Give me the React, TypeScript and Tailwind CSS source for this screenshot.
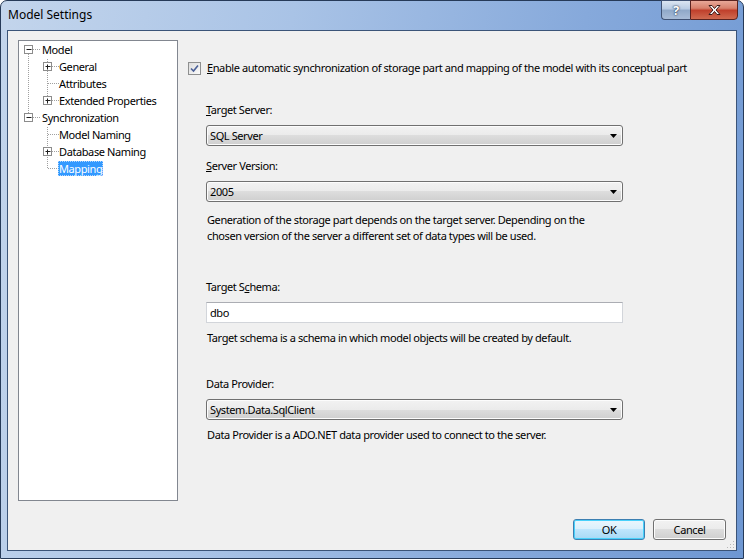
import React from 'react';

const treeRows = [
  { label: 'Model', level: 0 },
  { label: 'General', level: 1 },
  { label: 'Attributes', level: 1 },
  { label: 'Extended Properties', level: 1 },
  { label: 'Synchronization', level: 0 },
  { label: 'Model Naming', level: 1 },
  { label: 'Database Naming', level: 1 },
  { label: 'Mapping', level: 1, selected: true },
];

const rowY = (i: number) => 8.5 + 17 * i;

const TreeLines = () => {
  const box = (x: number, i: number, plus: boolean) => {
    const c = rowY(i);
    return (
      <g key={`b${x}-${i}`}>
        <rect x={x - 4} y={c - 4} width={8} height={8} fill="#fff" stroke="#8c8c8c" />
        <line x1={x - 2} y1={c} x2={x + 3} y2={c} stroke="#1f1f1f" />
        {plus && <line x1={x} y1={c - 2} x2={x} y2={c + 3} stroke="#1f1f1f" />}
      </g>
    );
  };
  const dots = { stroke: '#a0a0a0', strokeDasharray: '1 1' };
  return (
    <svg className="absolute left-0 top-0" width={158} height={180}>
      {/* root level */}
      <line x1={9.5} y1={13} x2={9.5} y2={rowY(4) - 4} {...dots} />
      <line x1={14} y1={rowY(0)} x2={21} y2={rowY(0)} {...dots} />
      <line x1={14} y1={rowY(4)} x2={21} y2={rowY(4)} {...dots} />
      {/* model children */}
      <line x1={28.5} y1={18} x2={28.5} y2={rowY(3)} {...dots} />
      <line x1={29} y1={rowY(2)} x2={40} y2={rowY(2)} {...dots} />
      <line x1={33} y1={rowY(1)} x2={40} y2={rowY(1)} {...dots} />
      <line x1={33} y1={rowY(3)} x2={40} y2={rowY(3)} {...dots} />
      {/* sync children */}
      <line x1={28.5} y1={86} x2={28.5} y2={rowY(7)} {...dots} />
      <line x1={29} y1={rowY(5)} x2={40} y2={rowY(5)} {...dots} />
      <line x1={33} y1={rowY(6)} x2={40} y2={rowY(6)} {...dots} />
      <line x1={29} y1={rowY(7)} x2={38} y2={rowY(7)} {...dots} />
      {box(9.5, 0, false)}
      {box(9.5, 4, false)}
      {box(28.5, 1, true)}
      {box(28.5, 3, true)}
      {box(28.5, 6, true)}
    </svg>
  );
};

const Combo = ({ value }: { value: string }) => (
  <div className="flex items-center justify-between h-[21px] w-[417px] rounded-[3px] border border-[#707070] bg-[linear-gradient(#f2f2f2,#ebebeb_50%,#dddddd_50%,#cfcfcf)] pl-[3px] pr-[5px] shadow-[inset_0_0_0_1px_#fcfcfc]">
    <span className="text-black">{value}</span>
    <svg width="7" height="4" viewBox="0 0 7 4">
      <path d="M0 0h7L3.5 4z" fill="#000" />
    </svg>
  </div>
);

export default function App() {
  return (
    <div className="w-[744px] h-[559px] overflow-hidden bg-white font-['Noto_Sans',sans-serif] text-[11px] leading-[16px] tracking-[-0.4px] text-black">
      <div className="relative w-[744px] h-[559px] rounded-t-[7px] border border-[#263a58] bg-[linear-gradient(100deg,#c3d5ec_0%,#a9c3e6_35%,#86a9db_70%,#6e97d2_100%)] flex flex-col">
        {/* title bar */}
        <div className="h-[29px] flex items-center pl-[7px] text-[12px] tracking-normal text-black">
          <span className="-mt-[1px]">Model Settings</span>
        </div>
        <div className="absolute top-[-1px] right-[5px] flex">
          <div className="w-[29px] h-[20px] border border-[#3f5274] border-r-0 rounded-bl-[4px] bg-[linear-gradient(#dbe5f2,#b8cbe3_45%,#8fa8c8_50%,#a8bcd8)] flex items-center justify-center">
            <span className="text-white font-bold text-[13px] leading-none [text-shadow:0_0_2px_#22334f,0_0_1px_#22334f]">?</span>
          </div>
          <div className="w-[48px] h-[20px] border border-[#5a2320] rounded-br-[4px] bg-[linear-gradient(#e8a898,#d7806c_40%,#c0402c_52%,#d06a50)] flex items-center justify-center">
            <svg width="15" height="12" viewBox="0 0 15 12">
              <path d="M2 1.5h3l2.5 3 2.5-3h3l-4 4.5 4 4.5h-3l-2.5-3-2.5 3h-3l4-4.5z" fill="#fff" stroke="#3a1a18" strokeWidth="1" />
            </svg>
          </div>
        </div>

        {/* client area */}
        <div className="ml-[6px] mr-[6px] h-[521px] border border-[#3b5478] bg-[#f0f0f0] flex flex-col relative">
          <div className="flex pl-[10px] pt-[9px]">
            <div className="relative w-[160px] h-[461px] border border-[#828790] bg-white">
              <TreeLines />
              <div className="relative flex flex-col">
                {treeRows.map((r) => (
                  <div key={r.label} className={`h-[17px] flex items-center ${r.level === 0 ? 'pl-[22px]' : 'pl-[39px]'}`}>
                    {r.selected ? (
                      <span className="px-[1px] h-[15px] flex items-center bg-[#3399ff] text-white outline outline-1 outline-dotted outline-[#b3d6ff] -outline-offset-1">
                        {r.label}
                      </span>
                    ) : (
                      <span className="px-[1px]">{r.label}</span>
                    )}
                  </div>
                ))}
              </div>
            </div>

            <div className="flex flex-col pl-[10px] pt-[20px]">
              <div className="flex items-center h-[16px]">
                <div className="w-[13px] h-[13px] border border-[#8e8f8f] bg-[linear-gradient(135deg,#dcdcdc,#fbfbfb)] flex items-center justify-center">
                  <svg width="9" height="9" viewBox="0 0 9 9">
                    <path d="M1 4.5l2.5 2.5L8 1.5" fill="none" stroke="#4a5f97" strokeWidth="1.6" />
                  </svg>
                </div>
                <span className="ml-[6px]">
                  <span className="underline">E</span>nable automatic synchronization of storage part and mapping of the model with its conceptual part
                </span>
              </div>

              <div className="pl-[18px] flex flex-col">
                <div className="mt-[26px]">
                  <span className="underline">T</span>arget Server:
                </div>
                <div className="mt-[7px]">
                  <Combo value="SQL Server" />
                </div>
                <div className="mt-[12px]">
                  <span className="underline">S</span>erver Version:
                </div>
                <div className="mt-[7px]">
                  <Combo value="2005" />
                </div>
                <div className="mt-[10px] pl-[1px]">
                  Generation of the storage part depends on the target server. Depending on the
                  <br />
                  chosen version of the server a different set of data types will be used.
                </div>
                <div className="mt-[35px]">
                  Target S<span className="underline">c</span>hema:
                </div>
                <div className="mt-[7px] w-[417px] h-[21px] border border-[#d2d5da] border-t-[#abadb3] bg-white pl-[3px] flex items-center">
                  dbo
                </div>
                <div className="mt-[7px] pl-[1px]">Target schema is a schema in which model objects will be created by default.</div>
                <div className="mt-[30px]">Data Provider:</div>
                <div className="mt-[7px]">
                  <Combo value="System.Data.SqlClient" />
                </div>
                <div className="mt-[7px] pl-[1px]">Data Provider is a ADO.NET data provider used to connect to the server.</div>
              </div>
            </div>
          </div>

          <div className="flex justify-end gap-[8px] pr-[10px] mt-[18px]">
            <button className="w-[72px] h-[21px] rounded-[3px] border border-[#3c7fb1] bg-[linear-gradient(#eaf6fd,#d9f0fc_50%,#bee6fd_50%,#a7d9f5)] shadow-[inset_0_0_0_1px_#48d1fb]">
              OK
            </button>
            <button className="w-[73px] h-[21px] rounded-[3px] border border-[#707070] bg-[linear-gradient(#f2f2f2,#ebebeb_50%,#dddddd_50%,#cfcfcf)] shadow-[inset_0_0_0_1px_#fcfcfc]">
              Cancel
            </button>
          </div>

          <svg className="absolute right-[1px] bottom-[1px]" width="8" height="8" viewBox="0 0 8 8">
            <g fill="#b8b8b8">
              <rect x="6" y="0" width="1" height="1" />
              <rect x="3" y="3" width="1" height="1" />
              <rect x="6" y="3" width="1" height="1" />
              <rect x="0" y="6" width="1" height="1" />
              <rect x="3" y="6" width="1" height="1" />
              <rect x="6" y="6" width="1" height="1" />
            </g>
          </svg>
        </div>
      </div>
    </div>
  );
}
